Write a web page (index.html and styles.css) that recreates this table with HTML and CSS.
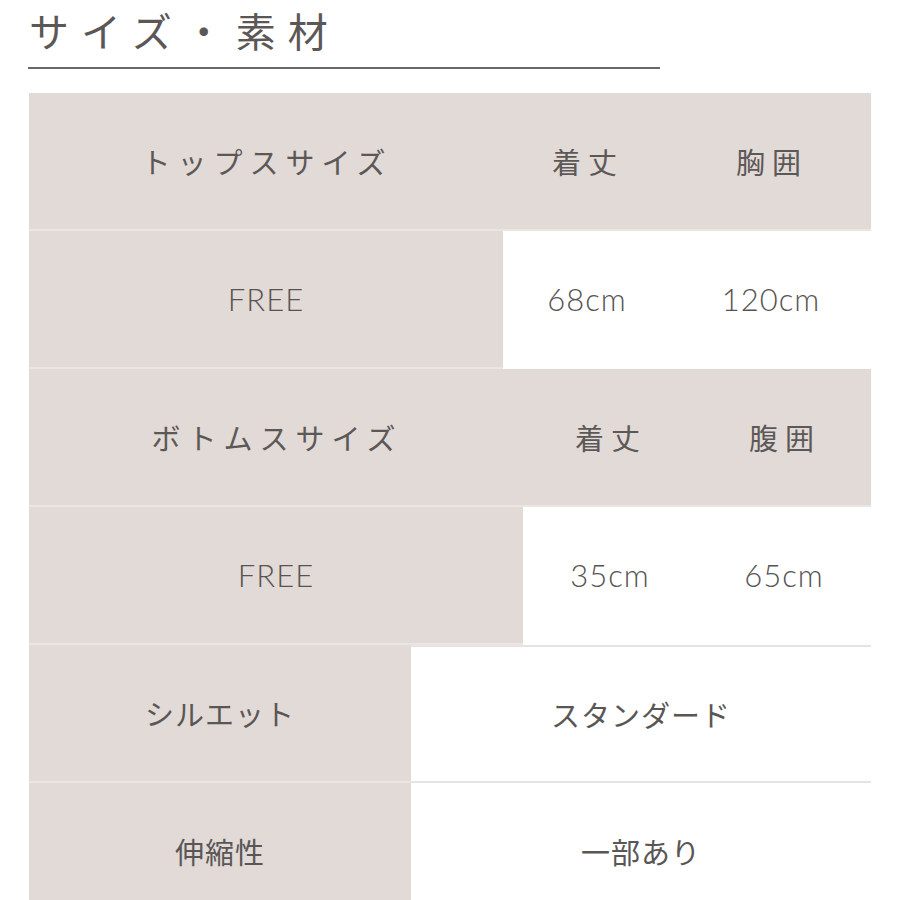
FILE: index.html
```html
<!DOCTYPE html>
<html lang="ja">
<head>
<meta charset="utf-8">
<title>サイズ・素材</title>
<link rel="stylesheet" href="styles.css">
</head>
<body>
<div class="page">
  <div class="title-wrap">
    <h1 class="title">サイズ・素材</h1>
  </div>
  <div class="table">
    <div class="row cols-top">
      <div class="cell g head">トップスサイズ</div>
      <div class="cell g head">着丈</div>
      <div class="cell g head">胸囲</div>
    </div>
    <div class="row cols-top">
      <div class="cell g val">FREE</div>
      <div class="cell w val plain">68cm</div>
      <div class="cell w val plain">120cm</div>
    </div>
    <div class="row cols-bottom">
      <div class="cell g head">ボトムスサイズ</div>
      <div class="cell g head">着丈</div>
      <div class="cell g head">腹囲</div>
    </div>
    <div class="row cols-bottom">
      <div class="cell g val">FREE</div>
      <div class="cell w val plain">35cm</div>
      <div class="cell w val plain">65cm</div>
    </div>
    <div class="row cols-spec">
      <div class="cell g jp">シルエット</div>
      <div class="cell w jp lined">スタンダード</div>
    </div>
    <div class="row cols-spec last">
      <div class="cell g jp">伸縮性</div>
      <div class="cell w jp">一部あり</div>
    </div>
  </div>
</div>
</body>
</html>
```
FILE: styles.css
```css
html, body {
  margin: 0;
  padding: 0;
  background: #ffffff;
}

body {
  font-family: "Noto Sans CJK JP", "Noto Sans", sans-serif;
  color: #5a5656;
}

.page {
  padding: 0 29px 0 29px;
  width: 842px;
}

.title-wrap {
  width: 632px;
  margin-left: -1px;
  border-bottom: 2px solid #6b6767;
  height: 67px;
}

.title {
  margin: 0;
  padding: 8px 0 0 1px;
  font-size: 40px;
  line-height: 44px;
  font-weight: 400;
  letter-spacing: 12px;
  color: #5b5757;
}

.table {
  margin-top: 24px;
  display: flex;
  flex-direction: column;
}

.row {
  display: grid;
  height: 138px;
}

.cols-top {
  grid-template-columns: 474px 168px 200px;
}

.cols-bottom {
  grid-template-columns: 494px 174px 174px;
}

.cols-spec {
  grid-template-columns: 382px 460px;
}

.cell {
  display: flex;
  align-items: center;
  justify-content: center;
  box-sizing: border-box;
  border-bottom: 2px solid transparent;
}

.g {
  background: #e1dad6;
  border-bottom-color: #ebe6e3;
}

.w {
  background: #ffffff;
  border-bottom-color: #ffffff;
}

.w.lined {
  border-top: 2px solid #e6e3e2;
  border-bottom-color: #e6e3e2;
}

.head {
  font-size: 29px;
  letter-spacing: 7px;
  padding-left: 2px;
  color: #5d5858;
}

.val {
  font-family: "Lato", "Noto Sans", sans-serif;
  font-size: 31px;
  font-weight: 300;
  letter-spacing: 1px;
  color: #575353;
}

.jp {
  font-size: 29px;
  letter-spacing: 1px;
}
```
